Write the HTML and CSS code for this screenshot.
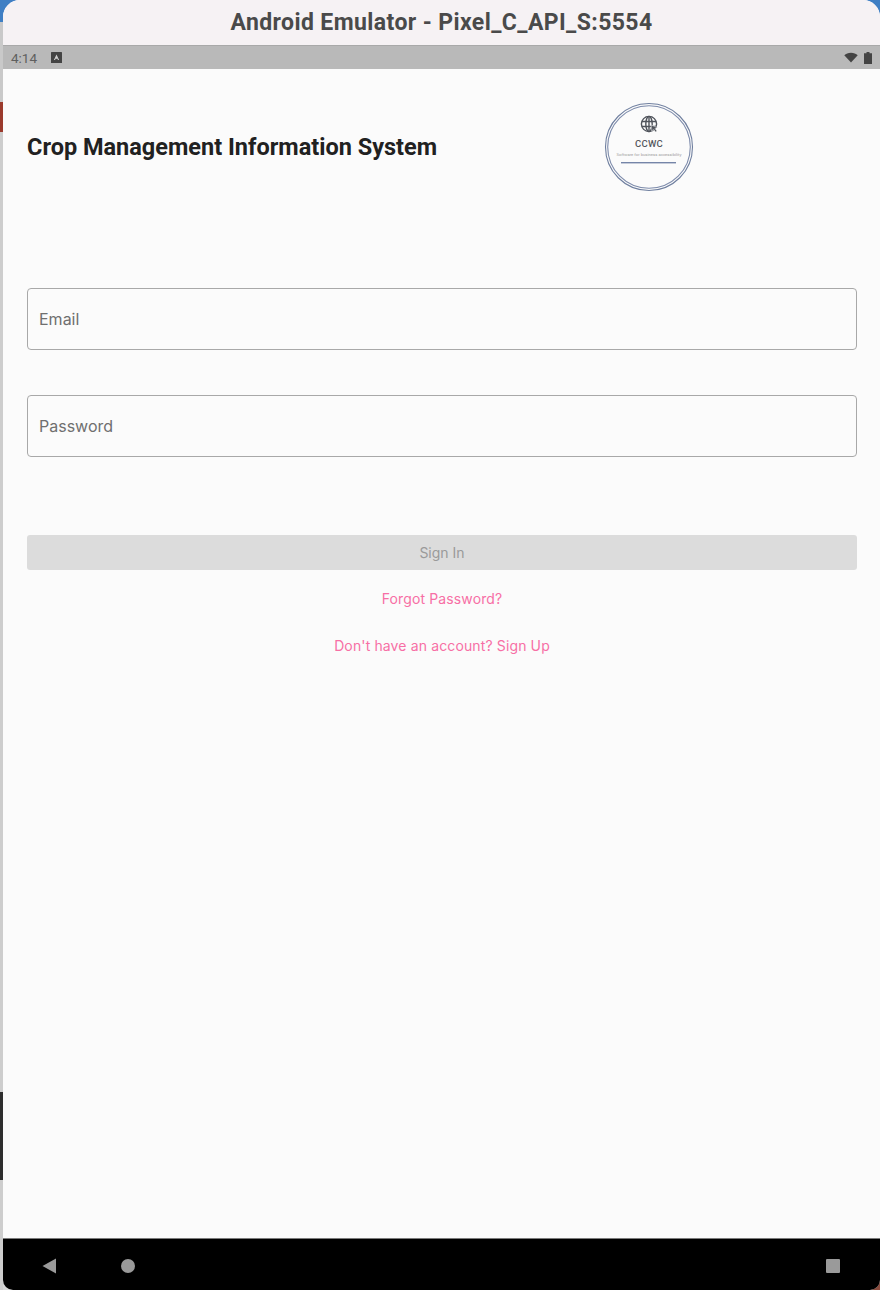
FILE: index.html
```html
<!DOCTYPE html>
<html lang="en">
<head>
  <meta charset="UTF-8" />
  <meta name="viewport" content="width=device-width, initial-scale=1.0" />
  <title>Android Emulator - Pixel_C_API_S:5554</title>
  <link rel="stylesheet" href="styles.css">
</head>
<body>
  <div class="desktop">
    <div class="window">
      <div class="titlebar">Android Emulator - Pixel_C_API_S:5554</div>

      <div class="statusbar">
        <div class="status-left">
          <span class="clock">4:14</span>
          <svg class="status-a" viewBox="0 0 10 10" width="11" height="11">
            <rect width="10" height="10" rx="0.5" fill="#444"/>
            <path d="M2.6 7.2 5 2.2l2.4 5H6.3L5.9 6.2H4.1l-.4 1z" fill="#d0d0d0"/>
          </svg>
        </div>
        <div class="status-right">
          <svg viewBox="0 0 15 11" width="14" height="11">
            <path d="M0.3 3.2C2 1.3 4.600 0.300 7.500 0.300s5.500 1 7.200 2.900L7.500 10.800z" fill="#444"/>
          </svg>
          <svg viewBox="0 0 8 12" width="8" height="12">
            <path d="M2.500 0h3v1.200H8V12H0V1.200h2.500z" fill="#444"/>
          </svg>
        </div>
      </div>

      <main class="app">
        <header class="app-header">
          <h1 class="app-title">Crop Management Information System</h1>
          <svg class="logo" viewBox="0 0 90 90" width="90" height="90">
            <circle cx="45" cy="45" r="43.500" fill="none" stroke="#6f7f9f" stroke-width="1.100"/>
            <circle cx="45" cy="45" r="41.300" fill="none" stroke="#7d8bab" stroke-width="1.100"/>
            <g fill="none" stroke="#50545c" stroke-width="1.400">
              <circle cx="45" cy="22" r="7.600"/>
              <ellipse cx="45" cy="22" rx="3.200" ry="7.600"/>
              <path d="M38 19.500h14M38 24.500h14M45 14.500v15"/>
            </g>
            <path d="M47 23l6.500 2.500-2.500 1 2 2.500-1.500 1-1.800-2.500-1.500 2z" fill="#50545c" stroke="#fbfbfb" stroke-width="0.500"/>
            <text class="logo-name" x="45" y="45" text-anchor="middle">CCWC</text>
            <text class="logo-tag" x="45" y="54" text-anchor="middle">Software for business accessibility</text>
            <rect x="17" y="60" width="55" height="1.400" fill="#7585a8"/>
          </svg>
        </header>

        <form class="login-form">
          <div class="field">Email</div>
          <div class="field">Password</div>
          <button class="signin" type="button">Sign In</button>
          <a class="link link-forgot">Forgot Password?</a>
          <a class="link link-signup">Don't have an account? Sign Up</a>
        </form>
      </main>

      <nav class="navbar">
        <div class="nav-left">
          <svg viewBox="0 0 14 16" width="14" height="16">
            <path d="M14 0.500V15.500L0.500 8z" fill="#9a9a9a"/>
          </svg>
          <span class="nav-home"></span>
        </div>
        <span class="nav-recent"></span>
      </nav>
    </div>
  </div>
</body>
</html>
```

FILE: styles.css
```css
html, body { margin: 0; height: 100%; }
body { font-family: "Roboto", sans-serif; background: #d6d6d6; overflow: hidden; }

/* what is left of the desktop behind the emulator window */
.desktop {
  height: 1290px;
  padding-left: 3px;
  box-sizing: border-box;
  background:
    linear-gradient(#3f7fc4 0, #3f7fc4 22px, transparent 22px) left top / 100% 100% no-repeat,
    linear-gradient(transparent 1260px, #8a4a3c 1260px) right top / 20px 100% no-repeat,
    linear-gradient(#c9c9c9 0, #c9c9c9 102px, #9b3a2c 102px, #9b3a2c 132px, #cdcdcd 132px, #cdcdcd 1092px, #2e2e2e 1092px, #2e2e2e 1180px, #cdcdcd 1180px) left top / 3px 100% no-repeat,
    #d6d6d6;
}

.window {
  height: 100%;
  display: flex;
  flex-direction: column;
  border-radius: 17px 17px 10px 10px;
  overflow: hidden;
  background: #fbfbfb;
}

.titlebar {
  height: 45px;
  flex: none;
  display: flex;
  align-items: center;
  justify-content: center;
  background: #f6f2f4;
  border-bottom: 1px solid #a9a9a9;
  color: #4a4a4a;
  font-size: 23px;
  font-weight: 700;
  letter-spacing: 0.4px;
}

.statusbar {
  height: 23px;
  flex: none;
  display: flex;
  align-items: center;
  justify-content: space-between;
  padding: 0 8px;
  background: #b9b9b9;
  color: #5f5f5f;
  font-size: 13.500px;
}
.status-left { display: flex; align-items: center; gap: 14px; }
.status-right { display: flex; align-items: center; gap: 6px; }
.status-right svg { display: block; }

.app { flex: 1; padding: 0 23px 0 24px; }

.app-header {
  display: flex;
  align-items: center;
  justify-content: space-between;
  height: 90px;
  margin-top: 33px;
  padding-right: 163px;
}
.app-title {
  margin: 0;
  color: #212121;
  font-size: 23.500px;
  font-weight: 700;
}
.logo { display: block; flex: none; }
.logo-name { font-size: 9.500px; font-weight: 500; fill: #55585e; letter-spacing: 0.3px; }
.logo-tag { font-size: 4.200px; fill: #a0a0a0; }

.login-form { display: flex; flex-direction: column; margin-top: 96px; }

.field {
  height: 60px;
  display: flex;
  align-items: center;
  padding-left: 11px;
  margin-bottom: 45px;
  border: 1px solid #a8a8a8;
  border-radius: 4px;
  color: #6f6f6f;
  font-family: "Inter", sans-serif;
  font-size: 16px;
}

.signin {
  height: 35px;
  margin-top: 33px;
  padding: 0;
  border: none;
  border-radius: 3px;
  background: #dcdcdc;
  color: #9a9a9a;
  font-family: "Inter", sans-serif;
  font-size: 14px;
}

.link {
  text-align: center;
  color: #f76fa5;
  font-family: "Inter", sans-serif;
  font-size: 14px;
  letter-spacing: 0.13px;
  line-height: 20px;
}
.link-forgot { margin-top: 19px; }
.link-signup { margin-top: 27px; }

.navbar {
  height: 52px;
  flex: none;
  display: flex;
  align-items: center;
  justify-content: space-between;
  padding: 2px 40px 0 39px;
  box-sizing: border-box;
  background: #000;
  border-top: 1px solid #7a7a7a;
}
.nav-left { display: flex; align-items: center; gap: 65px; }
.nav-left svg { display: block; }
.nav-home { width: 14px; height: 14px; border-radius: 50%; background: #9a9a9a; }
.nav-recent { width: 14px; height: 14px; border-radius: 1px; background: #9a9a9a; }
```
